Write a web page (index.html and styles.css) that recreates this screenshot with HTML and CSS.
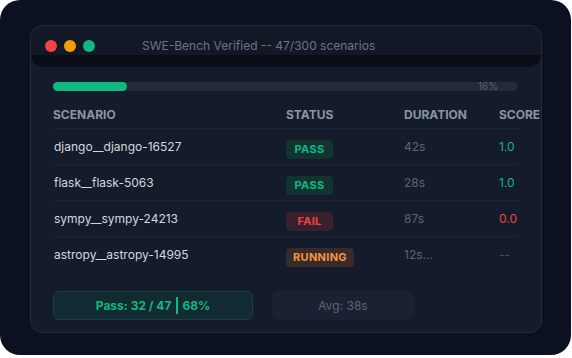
FILE: index.html
```html
<!DOCTYPE html>
<html>
<head>
  <link rel="stylesheet" href="styles.css">
</head>
<body>
  <div class="frame">
    <div class="window">
      <div class="titlebar">
        <div class="dots">
          <span class="dot red"></span>
          <span class="dot yellow"></span>
          <span class="dot green"></span>
        </div>
        <div class="title">SWE-Bench Verified -- 47/300 scenarios</div>
      </div>

      <div class="content">
        <div class="progress">
          <div class="progress-fill" style="width: 16%"></div>
          <span class="progress-label">16%</span>
        </div>

        <div class="table">
          <div class="row head">
            <div>SCENARIO</div>
            <div>STATUS</div>
            <div>DURATION</div>
            <div>SCORE</div>
          </div>
          <div class="row">
            <div class="name">django__django-16527</div>
            <div><span class="badge pass">PASS</span></div>
            <div class="dur">42s</div>
            <div class="score good">1.0</div>
          </div>
          <div class="row">
            <div class="name">flask__flask-5063</div>
            <div><span class="badge pass">PASS</span></div>
            <div class="dur">28s</div>
            <div class="score good">1.0</div>
          </div>
          <div class="row">
            <div class="name">sympy__sympy-24213</div>
            <div><span class="badge fail">FAIL</span></div>
            <div class="dur">87s</div>
            <div class="score bad">0.0</div>
          </div>
          <div class="row last">
            <div class="name">astropy__astropy-14995</div>
            <div><span class="badge running">RUNNING</span></div>
            <div class="dur">12s...</div>
            <div class="score none">--</div>
          </div>
        </div>

        <div class="summary">
          <div class="stat pass-stat">Pass: 32 / 47<span class="sep"></span>68%</div>
          <div class="stat avg-stat">Avg: 38s</div>
        </div>
      </div>
    </div>
  </div>
</body>
</html>
```

FILE: styles.css
```css
body {
  margin: 0;
  background: #ffffff;
  font-family: Inter, "Noto Sans", sans-serif;
}

.frame {
  width: 571px;
  height: 355px;
  background: #0b1120;
  border-radius: 20px;
  padding: 25px 29px 0 30px;
  box-sizing: border-box;
}

.window {
  height: 308px;
  background: #141b2b;
  border: 1px solid #222a3a;
  border-radius: 12px;
  overflow: hidden;
  box-sizing: border-box;
}

.titlebar {
  height: 42px;
  display: flex;
  align-items: center;
  padding: 0 0 0 14px;
  margin-top: -1px;
  border-radius: 12px;
  background: linear-gradient(180deg, #121826 0, #121826 71%, #0a0d15 71%, #0a0d15 100%);
  box-sizing: border-box;
}

.dots {
  display: flex;
  gap: 7px;
  margin-top: -1px;
}

.dot {
  width: 12px;
  height: 12px;
  border-radius: 50%;
}

.red { background: #ef4444; }
.yellow { background: #f59e0b; }
.green { background: #10b981; }

.title {
  margin-left: 47px;
  margin-top: -1px;
  font-size: 12px;
  color: #6b7489;
}

.content {
  padding: 15px 23px 0 22px;
}

.progress {
  position: relative;
  height: 9px;
  background: #232a3b;
  border-radius: 5px;
}

.progress-fill {
  height: 100%;
  background: #10b981;
  border-radius: 5px;
}

.progress-label {
  position: absolute;
  right: 20px;
  top: -2px;
  font-size: 10px;
  line-height: 13px;
  color: #5a6376;
}

.table {
  margin-top: 10px;
}

.row {
  display: grid;
  grid-template-columns: 233px 118px 95px 19px;
  align-items: center;
  height: 36px;
  box-sizing: border-box;
  border-bottom: 1px solid #1e2536;
  white-space: nowrap;
  font-size: 12px;
}

.row.head {
  height: 28px;
  padding-bottom: 1px;
  font-size: 12px;
  font-weight: 700;
  color: #8a94a8;
}

.row.last {
  border-bottom-color: transparent;
}

.name {
  color: #d3d7df;
  padding-left: 1px;
}

.badge {
  display: inline-block;
  min-width: 47px;
  box-sizing: border-box;
  padding: 0 7px;
  height: 19px;
  line-height: 19px;
  margin-top: 6px;
  border-radius: 4px;
  text-align: center;
  font-size: 11px;
  font-weight: 700;
  letter-spacing: 0.3px;
}

.badge.pass { background: #123431; color: #10b981; }
.badge.fail { background: #38202c; color: #ef4444; }
.badge.running { background: #382a28; color: #f59541; }

.dur { color: #5c6578; }

.score.good { color: #10b981; }
.score.bad { color: #ef4444; }
.score.none { color: #4b5366; }

.summary {
  display: flex;
  gap: 19px;
  margin-top: 18px;
}

.stat {
  height: 29px;
  display: flex;
  align-items: center;
  justify-content: center;
  border-radius: 6px;
  font-size: 12px;
  box-sizing: border-box;
}

.pass-stat {
  width: 200px;
  background: #122a31;
  border: 1px solid #16423f;
  color: #10b981;
  font-weight: 700;
}

.sep {
  width: 2px;
  height: 17px;
  background: #10b981;
  margin: 0 4px 0 5px;
}

.avg-stat {
  width: 142px;
  background: #1b2132;
  color: #5b6478;
}
```
